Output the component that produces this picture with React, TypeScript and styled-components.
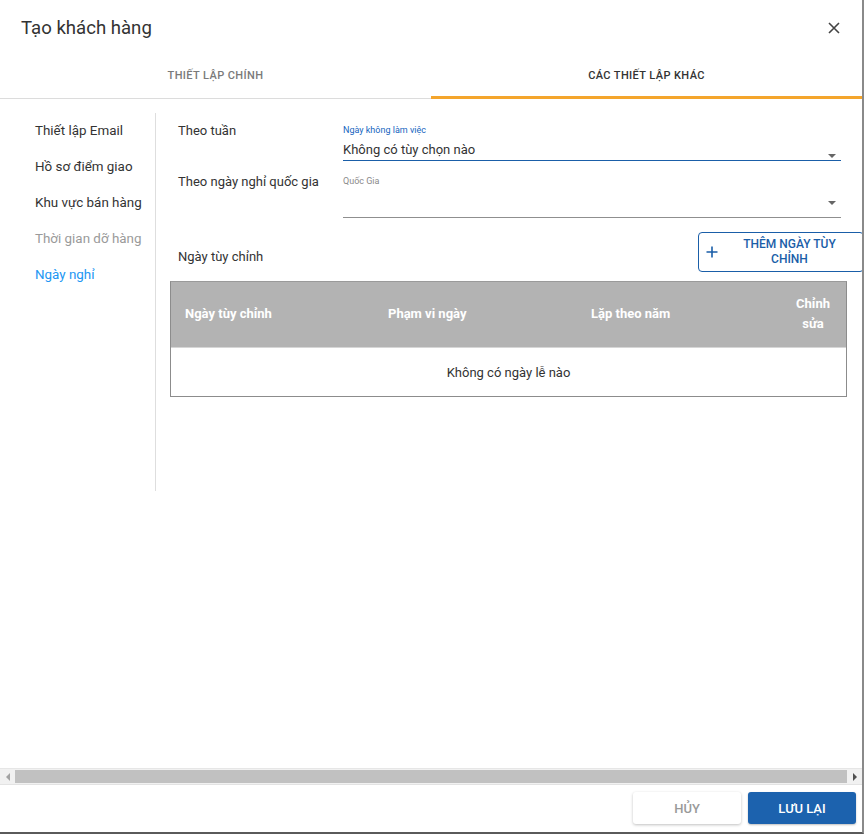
import styled, { createGlobalStyle } from "styled-components";

const GlobalStyle = createGlobalStyle`
  html, body {
    margin: 0;
    padding: 0;
    overflow: hidden;
    background: #ffffff;
  }
  * {
    box-sizing: border-box;
  }
  body {
    font-family: Roboto, "Liberation Sans", Arial, sans-serif;
    color: #333;
  }
`;

const Dialog = styled.div`
  width: 864px;
  height: 834px;
  display: flex;
  flex-direction: column;
  background: #fff;
  border-right: 2px solid #8a8a8a;
  border-bottom: 2px solid #5a5a5a;
  overflow: hidden;
`;

const Header = styled.div`
  height: 55px;
  display: flex;
  align-items: center;
  justify-content: space-between;
  padding: 0 20px 0 21px;
`;

const Title = styled.h2`
  margin: 0;
  font-size: 18.6px;
  font-weight: 400;
  color: #333;
`;

const CloseButton = styled.button`
  border: none;
  background: none;
  padding: 0;
  width: 16px;
  height: 16px;
  display: flex;
  align-items: center;
  justify-content: center;
  cursor: pointer;
`;

const Tabs = styled.div`
  height: 44px;
  display: flex;
  border-bottom: 1px solid #dcdcdc;
`;

const Tab = styled.div<{ active?: boolean }>`
  flex: 1;
  display: flex;
  align-items: center;
  justify-content: center;
  font-size: 11px;
  font-weight: 500;
  letter-spacing: 0.4px;
  text-transform: uppercase;
  color: ${(p) => (p.active ? "#333" : "#7a7a7a")};
  border-bottom: 3px solid ${(p) => (p.active ? "#f4a52c" : "transparent")};
  margin-bottom: -1px;
`;

const Body = styled.div`
  flex: 1;
  display: flex;
  align-items: flex-start;
  padding-top: 14px;
`;

const Nav = styled.nav`
  width: 156px;
  height: 378px;
  border-right: 1px solid #dedede;
  display: flex;
  flex-direction: column;
`;

const NavItem = styled.div<{ state?: "active" | "disabled" }>`
  height: 36px;
  line-height: 36px;
  padding-left: 35px;
  font-size: 13.4px;
  color: ${(p) =>
    p.state === "active" ? "#2196f3" : p.state === "disabled" ? "#9a9a9a" : "#333"};
`;

const Content = styled.div`
  flex: 1;
  padding-left: 14px;
  display: flex;
  flex-direction: column;
`;

const FieldGrid = styled.div`
  display: grid;
  grid-template-columns: 173px 498px;
  row-gap: 13px;
  padding-top: 10px;
`;

const RowLabel = styled.div<{ bottomGap?: number }>`
  padding-left: 8px;
  padding-bottom: ${(p) => p.bottomGap ?? 0}px;
  font-size: 13px;
  line-height: 16px;
`;

const Field = styled.div`
  display: flex;
  flex-direction: column;
`;

const FieldLabel = styled.div<{ focused?: boolean }>`
  height: 15px;
  line-height: 14px;
  font-size: 9px;
  color: ${(p) => (p.focused ? "#1565c0" : "#8a8a8a")};
`;

const Select = styled.div<{ focused?: boolean; h: number }>`
  height: ${(p) => p.h}px;
  display: flex;
  align-items: flex-end;
  justify-content: space-between;
  padding-bottom: 3px;
  font-size: 13px;
  color: #333;
  border-bottom: 1px solid ${(p) => (p.focused ? "#1a5ea8" : "#8f8f8f")};
`;

const Caret = styled.span<{ lift: number }>`
  width: 0;
  height: 0;
  border-left: 4px solid transparent;
  border-right: 4px solid transparent;
  border-top: 4px solid #666;
  margin-right: 5px;
  margin-bottom: ${(p) => p.lift}px;
`;

const CustomRow = styled.div`
  display: flex;
  align-items: flex-end;
  justify-content: space-between;
  margin-top: 14px;
`;

const AddButton = styled.button`
  width: 166px;
  height: 40px;
  display: flex;
  align-items: center;
  border: 1px solid #1a5ea8;
  border-radius: 4px;
  background: #fff;
  padding: 0 10px 0 7px;
  margin-right: -2px;
  color: #1a5ea8;
  font-family: Roboto, "Liberation Sans", Arial, sans-serif;
  cursor: pointer;
`;

const AddLabel = styled.span`
  flex: 1;
  font-size: 12px;
  font-weight: 500;
  line-height: 15px;
  text-align: center;
  padding-left: 8px;
`;

const Table = styled.div`
  margin-top: 9px;
  margin-right: 15px;
  border: 1px solid #8c8c8c;
  border-top-color: #9a9a9a;
`;

const TableHead = styled.div`
  height: 66px;
  display: grid;
  grid-template-columns: 203px 203px 203px 1fr;
  align-items: center;
  background: #b3b3b3;
  border-bottom: 1px solid #d6d6d6;
`;

const HeadCell = styled.div<{ center?: boolean }>`
  padding: 0 ${(p) => (p.center ? "16px" : "14px")};
  font-size: 13px;
  font-weight: 700;
  line-height: 20px;
  color: #fff;
  text-align: ${(p) => (p.center ? "center" : "left")};
  margin-top: -2px;
`;

const EmptyRow = styled.div`
  height: 48px;
  display: flex;
  align-items: center;
  justify-content: center;
  font-size: 13px;
  color: #333;
`;

const ScrollBar = styled.div`
  height: 17px;
  display: flex;
  align-items: center;
  background: #f1f1f1;
  border-top: 1px solid #e6e6e6;
  border-bottom: 1px solid #e3e3e3;
`;

const ScrollArrow = styled.div<{ dir: "left" | "right" }>`
  width: 15px;
  display: flex;
  justify-content: center;
  &::before {
    content: "";
    width: 0;
    height: 0;
    border-top: 4px solid transparent;
    border-bottom: 4px solid transparent;
    ${(p) =>
      p.dir === "left"
        ? "border-right: 4px solid #a3a3a3;"
        : "border-left: 4px solid #505050;"}
  }
`;

const ScrollThumb = styled.div`
  flex: 1;
  height: 13px;
  background: #c1c1c1;
`;

const Footer = styled.div`
  height: 47px;
  display: flex;
  align-items: flex-start;
  justify-content: flex-end;
  gap: 7px;
  padding: 7px 6px 0 0;
`;

const FooterButton = styled.button<{ primary?: boolean }>`
  width: 108px;
  height: 32px;
  border: none;
  border-radius: 3px;
  font-family: Roboto, "Liberation Sans", Arial, sans-serif;
  font-size: 13px;
  font-weight: 500;
  cursor: pointer;
  background: ${(p) => (p.primary ? "#1c62ae" : "#fff")};
  color: ${(p) => (p.primary ? "#fff" : "#9a9a9a")};
  box-shadow: ${(p) =>
    p.primary ? "0 1px 2px rgba(0,0,0,0.25)" : "0 1px 3px rgba(0,0,0,0.25)"};
`;

const navItems: { label: string; state?: "active" | "disabled" }[] = [
  { label: "Thiết lập Email" },
  { label: "Hồ sơ điểm giao" },
  { label: "Khu vực bán hàng" },
  { label: "Thời gian dỡ hàng", state: "disabled" },
  { label: "Ngày nghỉ", state: "active" },
];

function App() {
  return (
    <>
      <GlobalStyle />
      <Dialog>
        <Header>
          <Title>Tạo khách hàng</Title>
          <CloseButton aria-label="close">
            <svg width="12" height="12" viewBox="0 0 12 12">
              <path d="M1 1L11 11M11 1L1 11" stroke="#444" strokeWidth="1.6" />
            </svg>
          </CloseButton>
        </Header>

        <Tabs>
          <Tab>Thiết lập chính</Tab>
          <Tab active>Các thiết lập khác</Tab>
        </Tabs>

        <Body>
          <Nav>
            {navItems.map((item) => (
              <NavItem key={item.label} state={item.state}>
                {item.label}
              </NavItem>
            ))}
          </Nav>

          <Content>
            <FieldGrid>
              <RowLabel>Theo tuần</RowLabel>
              <Field>
                <FieldLabel focused>Ngày không làm việc</FieldLabel>
                <Select focused h={23}>
                  Không có tùy chọn nào
                  <Caret lift={-1} />
                </Select>
              </Field>

              <RowLabel>Theo ngày nghỉ quốc gia</RowLabel>
              <Field>
                <FieldLabel>Quốc Gia</FieldLabel>
                <Select h={29}>
                  <span />
                  <Caret lift={9} />
                </Select>
              </Field>
            </FieldGrid>

            <CustomRow>
              <RowLabel bottomGap={7}>Ngày tùy chỉnh</RowLabel>
              <AddButton>
                <svg width="12" height="12" viewBox="0 0 12 12">
                  <path d="M6 0.5V11.5M0.5 6H11.5" stroke="#1a5ea8" strokeWidth="1.6" />
                </svg>
                <AddLabel>THÊM NGÀY TÙY CHỈNH</AddLabel>
              </AddButton>
            </CustomRow>

            <Table>
              <TableHead>
                <HeadCell>Ngày tùy chỉnh</HeadCell>
                <HeadCell>Phạm vi ngày</HeadCell>
                <HeadCell>Lặp theo năm</HeadCell>
                <HeadCell center>Chỉnh sửa</HeadCell>
              </TableHead>
              <EmptyRow>Không có ngày lễ nào</EmptyRow>
            </Table>
          </Content>
        </Body>

        <ScrollBar>
          <ScrollArrow dir="left" />
          <ScrollThumb />
          <ScrollArrow dir="right" />
        </ScrollBar>

        <Footer>
          <FooterButton>HỦY</FooterButton>
          <FooterButton primary>LƯU LẠI</FooterButton>
        </Footer>
      </Dialog>
    </>
  );
}

export default App;
